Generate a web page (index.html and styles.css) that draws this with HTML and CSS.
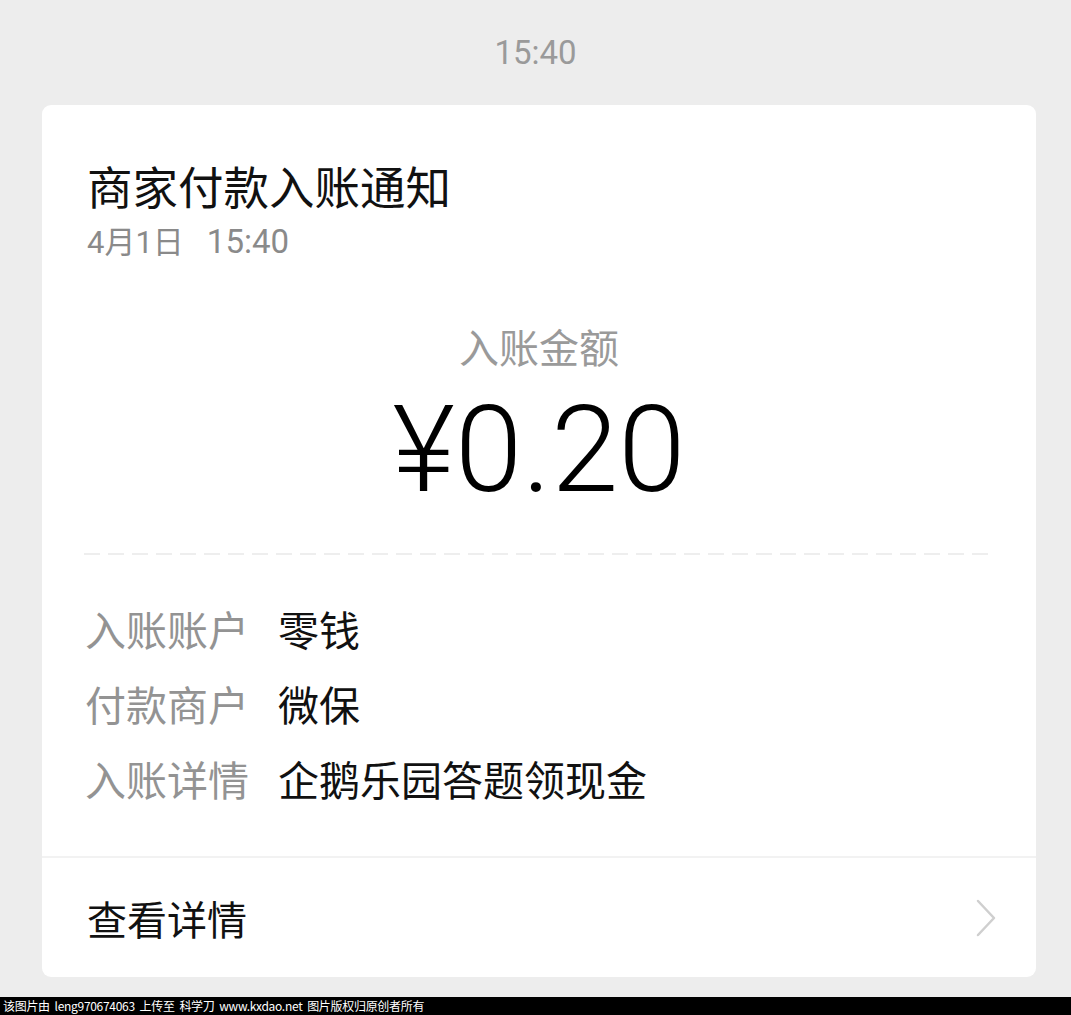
FILE: index.html
```html
<!DOCTYPE html>
<html lang="zh-CN">
<head>
  <meta charset="UTF-8">
  <title>商家付款入账通知</title>
  <link rel="stylesheet" href="styles.css">
</head>
<body>
  <div class="time-stamp">15:40</div>
  <div class="card">
    <div class="card-head">
      <div class="title">商家付款入账通知</div>
      <div class="date">4月1日<span class="date-time">15:40</span></div>
    </div>
    <div class="amount-block">
      <div class="amount-label">入账金额</div>
      <div class="amount">¥0.20</div>
    </div>
    <div class="dash"></div>
    <ul class="rows">
      <li><span class="key">入账账户</span><span class="val">零钱</span></li>
      <li><span class="key">付款商户</span><span class="val">微保</span></li>
      <li><span class="key">入账详情</span><span class="val">企鹅乐园答题领现金</span></li>
    </ul>
    <div class="card-foot">
      <span>查看详情</span>
      <svg class="chevron" width="20" height="38" viewBox="0 0 20 38">
        <polyline points="2,2 18,19 2,36" fill="none" stroke="#cfcfcf" stroke-width="2.5" stroke-linecap="round" stroke-linejoin="round"/>
      </svg>
    </div>
  </div>
  <div class="watermark">该图片由&nbsp;&nbsp;leng970674063&nbsp;&nbsp;上传至&nbsp;&nbsp;科学刀&nbsp;&nbsp;www.kxdao.net&nbsp;&nbsp;图片版权归原创者所有</div>
</body>
</html>
```

FILE: styles.css
```css
body {
  margin: 0;
  background: #ededed;
  font-family: Roboto, "Noto Sans CJK SC", sans-serif;
  color: #111;
}
.time-stamp {
  height: 105px;
  line-height: 106px;
  text-align: center;
  font-size: 33px;
  color: #9a9a9a;
}
.card {
  margin: 0 35px 0 42px;
  height: 872px;
  background: #fff;
  border-radius: 9px;
  display: flex;
  flex-direction: column;
}
.card-head {
  padding: 55px 45px 0;
}
.title {
  font-size: 45.5px;
  line-height: 50px;
  font-family: "Noto Sans CJK SC", sans-serif;
}
.date {
  margin-top: 14px;
  font-size: 31px;
  line-height: 36px;
  color: #8a8a8a;
}
.date-time {
  font-size: 33px;
  margin-left: 23px;
}
.amount-block {
  text-align: center;
  margin-top: 63px;
}
.amount-label {
  font-size: 40px;
  line-height: 44px;
  color: #9a9a9a;
  font-family: "Noto Sans CJK SC", sans-serif;
}
.amount {
  margin-top: 22px;
  font-size: 121px;
  line-height: 120px;
  font-weight: 300;
  color: #000;
}
.dash {
  margin: 43px 42px 0;
  height: 2px;
  background: repeating-linear-gradient(to right, #eeeeee 0 16px, transparent 16px 24px);
}
.rows {
  list-style: none;
  margin: 36px 0 0;
  padding: 0 43px;
  font-family: "Noto Sans CJK SC", sans-serif;
  font-size: 41px;
}
.rows li {
  display: flex;
  line-height: 75px;
}
.rows .key {
  width: 193px;
  color: #939393;
}
.rows .val {
  color: #111;
}
.card-foot {
  margin-top: auto;
  height: 119px;
  border-top: 2px solid #f2f2f2;
  display: flex;
  align-items: center;
  justify-content: space-between;
  padding: 0 40px 0 45px;
  font-family: "Noto Sans CJK SC", sans-serif;
  font-size: 40px;
}
.watermark {
  margin-top: 20px;
  height: 18px;
  line-height: 18px;
  background: #000;
  color: #fff;
  font-family: "Noto Sans CJK SC", sans-serif;
  font-size: 12px;
  letter-spacing: -0.3px;
  padding-left: 3px;
  white-space: nowrap;
}
```
